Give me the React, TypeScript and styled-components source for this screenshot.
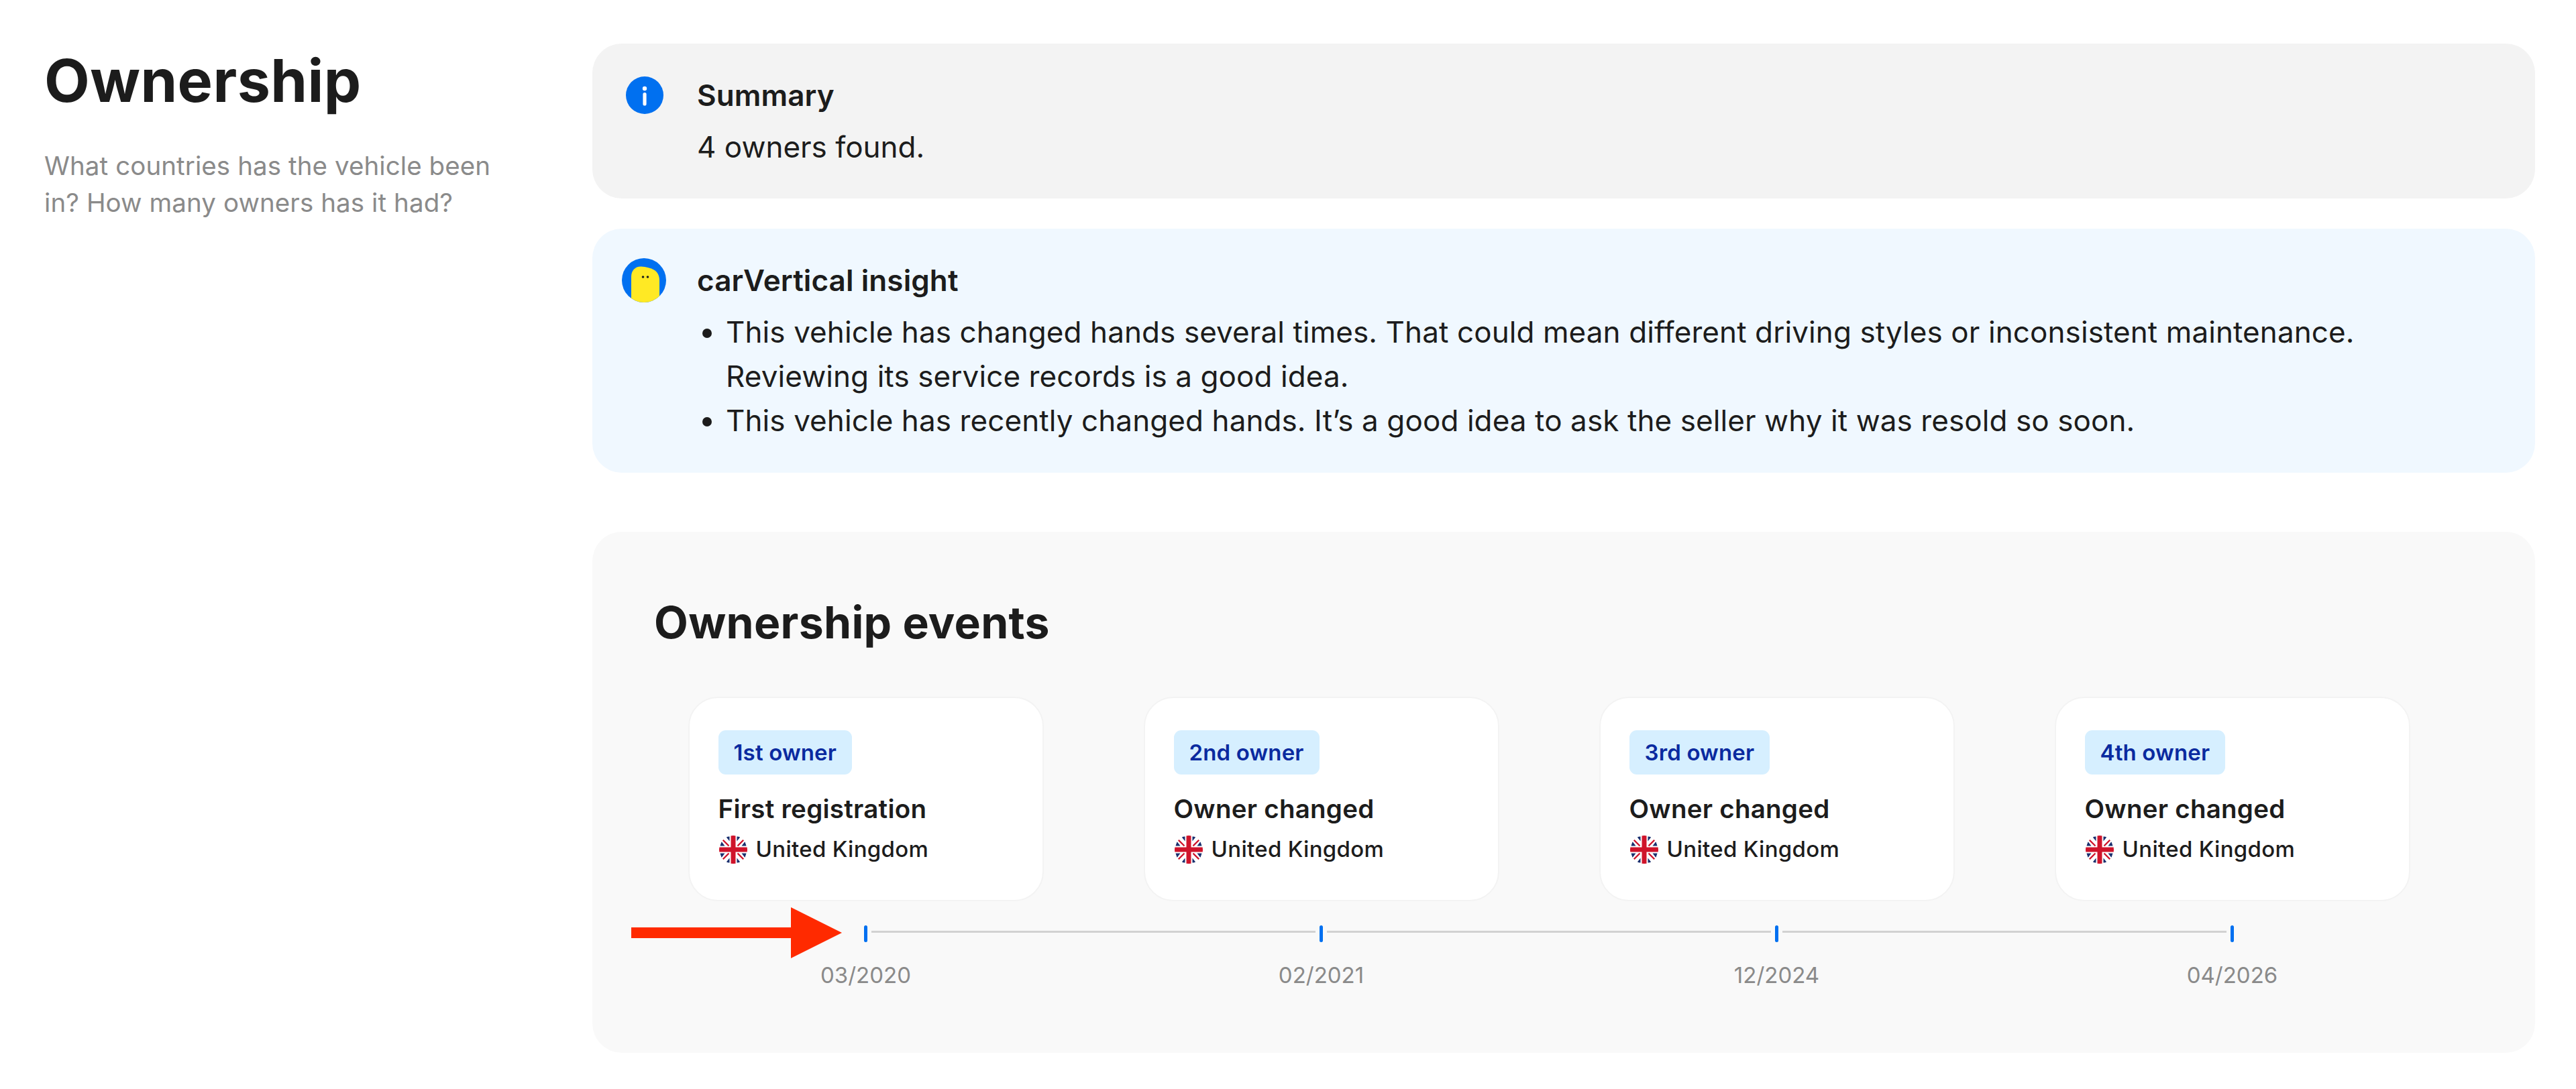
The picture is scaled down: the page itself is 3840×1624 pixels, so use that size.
import * as React from "react";
import styled, { createGlobalStyle } from "styled-components";

const GlobalStyle = createGlobalStyle`
  html, body {
    margin: 0;
    padding: 0;
    background: #fff;
  }
  body {
    font-family: Inter, "Noto Sans", sans-serif;
    color: #1c1c1c;
  }
`;

const Page = styled.div`
  display: grid;
  grid-template-columns: 817px 2896px;
  padding: 65px 61px 54px 66px;
  height: 1624px;
  box-sizing: border-box;
`;

const Sidebar = styled.aside`
  display: flex;
  flex-direction: column;
`;

const Title = styled.h1`
  margin: 0;
  font-size: 88px;
  line-height: 110px;
  font-weight: 700;
  letter-spacing: 0.4px;
`;

const Subtitle = styled.p`
  margin: 45px 0 0;
  width: 700px;
  font-size: 38.5px;
  line-height: 55px;
  letter-spacing: 0.08px;
  color: #8a8a8a;
`;

const Main = styled.main`
  display: flex;
  flex-direction: column;
`;

const Notice = styled.section<{ $tone: "grey" | "blue" }>`
  display: flex;
  gap: 46px;
  padding: 44px 44px ${(p) => (p.$tone === "blue" ? "45px" : "44px")};
  border-radius: 44px;
  margin-bottom: 45px;
  background: ${(p) => (p.$tone === "blue" ? "#f0f8ff" : "#f3f3f3")};
`;

const IconSlot = styled.div`
  flex: none;
  width: 66px;
  height: 66px;
  display: flex;
  align-items: center;
  justify-content: center;
`;

const NoticeBody = styled.div`
  display: flex;
  flex-direction: column;
  gap: 11px;
  font-size: 44px;
  line-height: 66px;
`;

const NoticeTitle = styled.div`
  font-weight: 600;
  letter-spacing: 0.1px;
`;

const BulletList = styled.ul`
  margin: 0;
  padding: 0 0 0 43px;
  max-width: 2560px;
  letter-spacing: 0.09px;
`;

const Panel = styled.section`
  position: relative;
  margin-top: 43px;
  height: 777px;
  box-sizing: border-box;
  padding: 91px 0 0 68px;
  background: #f9f9f9;
  border-radius: 44px;
`;

const PanelTitle = styled.h2`
  margin: 0 0 67px 24px;
  font-size: 66px;
  line-height: 88px;
  font-weight: 700;
  letter-spacing: 0.3px;
`;

const Columns = styled.div`
  display: grid;
  grid-template-columns: repeat(4, 679px);
`;

const CardCell = styled.div`
  display: flex;
  justify-content: center;
`;

const Card = styled.article`
  width: 530px;
  height: 305px;
  box-sizing: border-box;
  padding: 48px 43px 0;
  background: #fff;
  border: 2px solid #f3f3f3;
  border-radius: 44px;
`;

const Badge = styled.span`
  display: inline-block;
  height: 66px;
  padding: 0 23px;
  font-size: 33px;
  line-height: 66px;
  font-weight: 600;
  letter-spacing: 0.15px;
  color: #0a2a9f;
  background: #d6efff;
  border-radius: 11px;
`;

const CardTitle = styled.div`
  margin-top: 18px;
  font-size: 38.5px;
  line-height: 66px;
  font-weight: 600;
  letter-spacing: 0.25px;
`;

const Country = styled.div`
  display: flex;
  align-items: center;
  gap: 13px;
  padding-left: 1px;
  font-size: 33px;
  line-height: 55px;
  font-weight: 500;
  letter-spacing: 0.3px;
`;

const Timeline = styled(Columns)`
  margin-top: 36px;
`;

const Stop = styled.div`
  display: flex;
  flex-direction: column;
  align-items: center;
`;

const Track = styled.div`
  align-self: stretch;
  display: flex;
  gap: 6px;
`;

const Segment = styled.div<{ $hidden?: boolean }>`
  flex: 1;
  height: 3px;
  margin-top: 8px;
  background: ${(p) => (p.$hidden ? "transparent" : "#d2d2d2")};
`;

const Tick = styled.div`
  flex: none;
  width: 5px;
  height: 25px;
  border-radius: 3px;
  background: #0070f0;
`;

const DateLabel = styled.div`
  margin-top: 22px;
  font-size: 33px;
  line-height: 55px;
  color: #8a8a8a;
`;

const Arrow = styled.svg`
  position: absolute;
  left: 58px;
  top: 560px;
`;

const InfoIcon = () => (
  <svg width="58" height="56" viewBox="0 0 58 56">
    <circle cx="30" cy="28" r="28" fill="#0070f0" />
    <circle cx="30" cy="18" r="3.2" fill="#fff" />
    <rect x="27.4" y="24" width="5.2" height="19.5" rx="2.6" fill="#fff" />
  </svg>
);

const InsightIcon = () => (
  <svg width="66" height="66" viewBox="0 0 66 66">
    <defs>
      <clipPath id="insight-clip">
        <circle cx="33" cy="33" r="33" />
      </clipPath>
    </defs>
    <g clipPath="url(#insight-clip)">
      <rect width="66" height="66" fill="#0070f0" />
      <path
        d="M14 66V28C14 18 20 12 29 12.5C36 13 42 14.5 47 17C53 20 56 26 56 33V66Z"
        fill="#ffe924"
      />
    </g>
    <circle cx="31.5" cy="28" r="1.8" fill="#1c1c1c" />
    <circle cx="38.5" cy="28" r="1.8" fill="#1c1c1c" />
  </svg>
);

const UkFlag = () => (
  <svg width="42" height="42" viewBox="0 0 42 42" style={{ flex: "none" }}>
    <defs>
      <clipPath id="flag-clip">
        <circle cx="21" cy="21" r="21" />
      </clipPath>
    </defs>
    <g clipPath="url(#flag-clip)">
      <rect width="42" height="42" fill="#fff" />
      <path
        d="M10 1.5H15.5V8.5Z M32 1.5H26.5V8.5Z M10 40.5H15.5V33.5Z M32 40.5H26.5V33.5Z M1.5 15.5H8.5L3.5 9Z M40.5 15.5H33.5L38.5 9Z M1.5 26.5H8.5L3.5 33Z M40.5 26.5H33.5L38.5 33Z"
        fill="#1a2f6e"
      />
      <path d="M5.5 6.5 14.5 15.5M36.5 6.5 27.5 15.5M5.5 35.5 14.5 26.5M36.5 35.5 27.5 26.5" stroke="#cf142b" strokeWidth="2.4" />
      <rect x="17.5" width="7" height="42" fill="#cf142b" />
      <rect y="17.5" width="42" height="7" fill="#cf142b" />
    </g>
  </svg>
);

const events = [
  { owner: "1st owner", title: "First registration", date: "03/2020" },
  { owner: "2nd owner", title: "Owner changed", date: "02/2021" },
  { owner: "3rd owner", title: "Owner changed", date: "12/2024" },
  { owner: "4th owner", title: "Owner changed", date: "04/2026" }
];

const App: React.FC = () => (
  <Page>
    <GlobalStyle />
    <Sidebar>
      <Title>Ownership</Title>
      <Subtitle>What countries has the vehicle been in? How many owners has it had?</Subtitle>
    </Sidebar>
    <Main>
      <Notice $tone="grey">
        <IconSlot>
          <InfoIcon />
        </IconSlot>
        <NoticeBody>
          <NoticeTitle>Summary</NoticeTitle>
          <div>4 owners found.</div>
        </NoticeBody>
      </Notice>
      <Notice $tone="blue">
        <IconSlot>
          <InsightIcon />
        </IconSlot>
        <NoticeBody>
          <NoticeTitle>carVertical insight</NoticeTitle>
          <BulletList>
            <li>
              This vehicle has changed hands several times. That could mean different driving styles or inconsistent
              maintenance. Reviewing its service records is a good idea.
            </li>
            <li>This vehicle has recently changed hands. It’s a good idea to ask the seller why it was resold so soon.</li>
          </BulletList>
        </NoticeBody>
      </Notice>
      <Panel>
        <PanelTitle>Ownership events</PanelTitle>
        <Columns>
          {events.map((e) => (
            <CardCell key={e.date}>
              <Card>
                <Badge>{e.owner}</Badge>
                <CardTitle>{e.title}</CardTitle>
                <Country>
                  <UkFlag />
                  United Kingdom
                </Country>
              </Card>
            </CardCell>
          ))}
        </Columns>
        <Timeline>
          {events.map((e, i) => (
            <Stop key={e.date}>
              <Track>
                <Segment $hidden={i === 0} />
                <Tick />
                <Segment $hidden={i === events.length - 1} />
              </Track>
              <DateLabel>{e.date}</DateLabel>
            </Stop>
          ))}
        </Timeline>
        <Arrow width="314" height="76" viewBox="0 0 314 76">
          <path d="M0 30H238V0L314 38L238 76V46H0Z" fill="#ff2a00" />
        </Arrow>
      </Panel>
    </Main>
  </Page>
);

export default App;
